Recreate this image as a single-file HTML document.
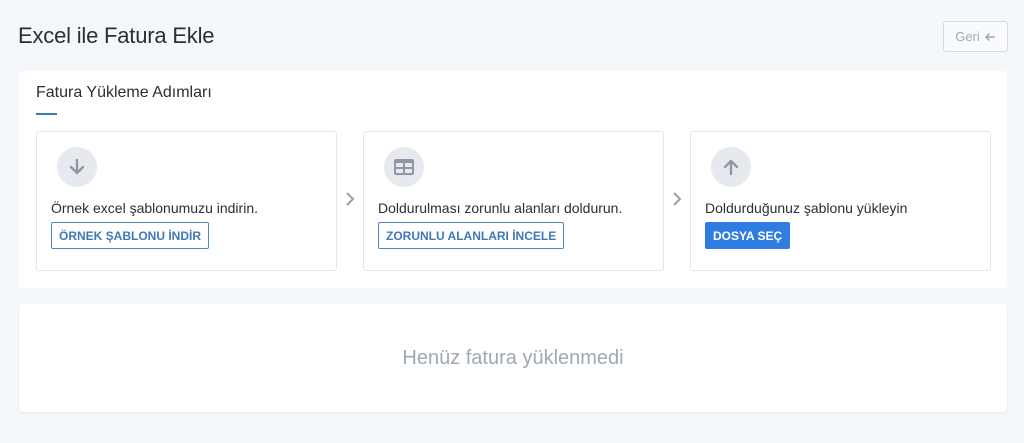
<!DOCTYPE html>
<html><head><meta charset="utf-8"><style>
*{box-sizing:border-box;margin:0;padding:0}
body{width:1024px;height:443px;background:#f5f8fb;font-family:"Liberation Sans",sans-serif;position:relative;overflow:hidden;color:#333}
.abs{position:absolute}
h1{position:absolute;left:18px;top:23px;font-size:22px;font-weight:400;color:#2b2f33;letter-spacing:-0.2px}
.geri{left:943px;top:21px;width:65px;height:31px;border:1px solid #d7dbe0;border-radius:3px;color:#a3aab3;font-size:13px;display:flex;align-items:center;justify-content:center;gap:4px;background:#f8fafc}
.card{left:19px;width:988px;background:#fff;border-radius:4px}
.sub{left:36px;top:84px;font-size:16px;color:#2b2f33}
.ul{left:36px;top:113px;width:21px;height:2px;background:#3b7bb0}
.step{top:131px;width:301px;height:140px;border:1px solid #e3e6ea;border-radius:3px;background:#fff}
.ic{position:absolute;left:20px;top:15px;width:40px;height:40px;border-radius:50%;background:#e6e9ed;display:flex;align-items:center;justify-content:center}
.txt{position:absolute;left:14px;top:68px;font-size:14px;color:#2b2f33}
.btn{position:absolute;left:14px;top:90px;height:27px;border:1px solid #4a86c4;border-radius:2px;color:#3c7ab8;font-size:12px;font-weight:700;padding:0 7px;display:flex;align-items:center;letter-spacing:0}
.chev{top:191px}
</style></head><body>
<h1>Excel ile Fatura Ekle</h1>
<div class="abs geri">Geri <svg width="12" height="10" viewBox="0 0 12 10"><path d="M11 5H2M5.5 1.5L2 5l3.5 3.5" stroke="#a3aab3" stroke-width="1.5" fill="none"/></svg></div>
<div class="abs card" style="top:71px;height:217px"></div>
<div class="abs sub">Fatura Yükleme Adımları</div>
<div class="abs ul"></div>
<div class="abs step" style="left:36px">
 <div class="ic"><svg width="20" height="20" viewBox="0 0 20 20"><path d="M10 3v13M4 10l6 6 6-6" stroke="#8e98a5" stroke-width="2.4" fill="none" stroke-linecap="round" stroke-linejoin="round"/></svg></div>
 <div class="txt">Örnek excel şablonumuzu indirin.</div>
 <div class="btn">ÖRNEK ŞABLONU İNDİR</div>
</div>
<svg class="abs chev" style="left:345px" width="10" height="16" viewBox="0 0 10 16"><path d="M2 2l6 6-6 6" stroke="#9aa1aa" stroke-width="2" fill="none"/></svg>
<div class="abs step" style="left:363px">
 <div class="ic"><svg width="22" height="18" viewBox="0 0 22 18"><rect x="1" y="1" width="20" height="16" rx="2" fill="#8e98a5"/><rect x="3" y="5" width="7" height="4" fill="#e6e9ed"/><rect x="12" y="5" width="7" height="4" fill="#e6e9ed"/><rect x="3" y="11" width="7" height="4" fill="#e6e9ed"/><rect x="12" y="11" width="7" height="4" fill="#e6e9ed"/></svg></div>
 <div class="txt">Doldurulması zorunlu alanları doldurun.</div>
 <div class="btn">ZORUNLU ALANLARI İNCELE</div>
</div>
<svg class="abs chev" style="left:672px" width="10" height="16" viewBox="0 0 10 16"><path d="M2 2l6 6-6 6" stroke="#9aa1aa" stroke-width="2" fill="none"/></svg>
<div class="abs step" style="left:690px">
 <div class="ic"><svg width="20" height="20" viewBox="0 0 20 20"><path d="M10 17V4M4 10l6-6 6 6" stroke="#8e98a5" stroke-width="2.4" fill="none" stroke-linecap="round" stroke-linejoin="round"/></svg></div>
 <div class="txt">Doldurduğunuz şablonu yükleyin</div>
 <div class="btn" style="background:#2f7de1;border-color:#2f7de1;color:#fff">DOSYA SEÇ</div>
</div>
<div class="abs card" style="top:304px;height:108px;box-shadow:0 1px 3px rgba(0,0,0,.08)"></div>
<div class="abs" style="left:19px;width:988px;top:347px;text-align:center;font-size:20px;color:#a0a8b4">Henüz fatura yüklenmedi</div>
</body></html>
